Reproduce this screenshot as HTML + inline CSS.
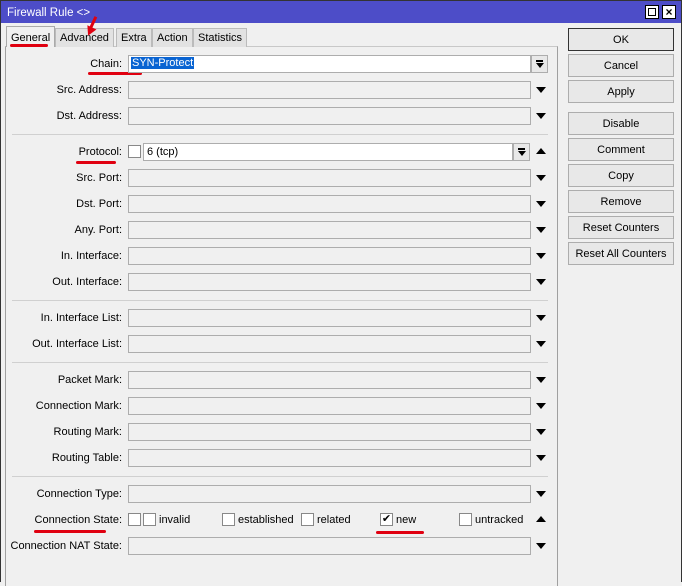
<!DOCTYPE html>
<html><head><meta charset="utf-8"><style>
*{margin:0;padding:0;box-sizing:border-box}
body{width:682px;height:582px;background:#f0f0f0;font-family:"Liberation Sans",sans-serif;font-size:11px;color:#000;position:relative;overflow:hidden}
.a{position:absolute}
.title{left:0;top:0;width:682px;height:23px;background:#4d4dc8;color:#fff;font-size:11.5px;padding:6px 0 0 6px;border:1px solid #333;border-bottom:none}
.wb{border-left:1px solid #333;border-right:1px solid #333;left:0;top:23px;width:682px;height:559px}
.tb{height:19px;top:28px;border:1px solid #bbb;border-bottom:none;background:#e2e2e2;padding:3px 4px 0;font-size:11px}
.panel{left:5px;top:46px;width:553px;height:540px;border-left:1px solid #a0a0a0;border-right:1px solid #a0a0a0;border-top:1px solid #c8c8c8}
.lbl{text-align:right;white-space:nowrap;font-size:11px}
.f{left:128px;width:403px;height:18px;border:1px solid #adadad;background:#f0f0f0}
.sep{left:12px;width:536px;height:1px;background:#d0d0d0}
.dn{width:0;height:0;border-left:5px solid transparent;border-right:5px solid transparent;border-top:6px solid #000;left:536px}
.up{width:0;height:0;border-left:5px solid transparent;border-right:5px solid transparent;border-bottom:6px solid #000;left:536px}
.btn{left:568px;width:106px;height:23px;border:1px solid #adadad;background:#e8e8e8;text-align:center;padding-top:5px;font-size:11px}
.cb{width:13px;height:13px;border:1px solid #888;background:#fff}
.red{height:3px;background:#e00010;border-radius:2px}
.dd{width:17px;height:18px;border:1px solid #adadad;background:#e8e8e8}
.dd:before{content:"";position:absolute;left:4px;top:4px;width:7px;height:2px;background:#000}
.dd:after{content:"";position:absolute;left:4px;top:7px;border-left:4px solid transparent;border-right:4px solid transparent;border-top:5px solid #000}
</style></head><body>
<div class="a title">Firewall Rule &lt;&gt;</div>
<div class="a" style="left:645px;top:5px;width:14px;height:14px;background:#fff;border:1px solid #000"><div style="margin:2px;width:8px;height:8px;border:1px solid #000"></div></div>
<div class="a" style="left:662px;top:5px;width:14px;height:14px;background:#fff;border:1px solid #000;font-weight:bold;font-size:12px;line-height:12px;text-align:center">×</div>
<div class="a wb"></div>
<div class="a panel"></div>
<div class="a tb" style="left:6px;top:26px;height:21px;background:#f0f0f0;padding-top:5px;border-color:#aaa">General</div>
<div class="a tb" style="left:55px">Advanced</div>
<div class="a tb" style="left:116px">Extra</div>
<div class="a tb" style="left:152px">Action</div>
<div class="a tb" style="left:193px">Statistics</div>
<div class="a red" style="left:10px;top:44px;width:38px"></div>
<div class="a" style="left:91px;top:16px;width:3px;height:16px;background:#e00010;transform:rotate(25deg)"></div>
<div class="a" style="left:85px;top:27px;border-left:5px solid transparent;border-right:5px solid transparent;border-top:9px solid #e00010;transform:rotate(25deg)"></div>

<div class="a lbl" style="top:58px;left:0;width:122px">Chain:</div>
<div class="a red" style="left:88px;top:72px;width:54px"></div>
<div class="a f" style="top:55px;background:#fff;padding:1px 0 0 2px"><span style="background:#0a64d2;color:#fff;padding:0 1px">SYN-Protect</span></div>
<div class="a dd" style="left:531px;top:55px"></div>

<div class="a lbl" style="top:84px;left:0;width:122px">Src. Address:</div><div class="a f" style="top:81px"></div><div class="a dn" style="top:87px"></div>
<div class="a lbl" style="top:110px;left:0;width:122px">Dst. Address:</div><div class="a f" style="top:107px"></div><div class="a dn" style="top:113px"></div>
<div class="a sep" style="top:134px"></div>

<div class="a lbl" style="top:146px;left:0;width:122px">Protocol:</div>
<div class="a red" style="left:76px;top:161px;width:40px"></div>
<div class="a cb" style="left:128px;top:145px"></div>
<div class="a f" style="left:143px;top:143px;width:370px;background:#fff;padding:2px 3px">6 (tcp)</div>
<div class="a dd" style="left:513px;top:143px"></div>
<div class="a up" style="top:148px"></div>

<div class="a lbl" style="top:172px;left:0;width:122px">Src. Port:</div><div class="a f" style="top:169px"></div><div class="a dn" style="top:175px"></div>
<div class="a lbl" style="top:198px;left:0;width:122px">Dst. Port:</div><div class="a f" style="top:195px"></div><div class="a dn" style="top:201px"></div>
<div class="a lbl" style="top:224px;left:0;width:122px">Any. Port:</div><div class="a f" style="top:221px"></div><div class="a dn" style="top:227px"></div>
<div class="a lbl" style="top:250px;left:0;width:122px">In. Interface:</div><div class="a f" style="top:247px"></div><div class="a dn" style="top:253px"></div>
<div class="a lbl" style="top:276px;left:0;width:122px">Out. Interface:</div><div class="a f" style="top:273px"></div><div class="a dn" style="top:279px"></div>
<div class="a sep" style="top:300px"></div>
<div class="a lbl" style="top:312px;left:0;width:122px">In. Interface List:</div><div class="a f" style="top:309px"></div><div class="a dn" style="top:315px"></div>
<div class="a lbl" style="top:338px;left:0;width:122px">Out. Interface List:</div><div class="a f" style="top:335px"></div><div class="a dn" style="top:341px"></div>
<div class="a sep" style="top:362px"></div>
<div class="a lbl" style="top:374px;left:0;width:122px">Packet Mark:</div><div class="a f" style="top:371px"></div><div class="a dn" style="top:377px"></div>
<div class="a lbl" style="top:400px;left:0;width:122px">Connection Mark:</div><div class="a f" style="top:397px"></div><div class="a dn" style="top:403px"></div>
<div class="a lbl" style="top:426px;left:0;width:122px">Routing Mark:</div><div class="a f" style="top:423px"></div><div class="a dn" style="top:429px"></div>
<div class="a lbl" style="top:452px;left:0;width:122px">Routing Table:</div><div class="a f" style="top:449px"></div><div class="a dn" style="top:455px"></div>
<div class="a sep" style="top:476px"></div>
<div class="a lbl" style="top:488px;left:0;width:122px">Connection Type:</div><div class="a f" style="top:485px"></div><div class="a dn" style="top:491px"></div>

<div class="a lbl" style="top:514px;left:0;width:122px">Connection State:</div>
<div class="a red" style="left:34px;top:530px;width:72px"></div>
<div class="a cb" style="left:128px;top:513px"></div>
<div class="a cb" style="left:143px;top:513px"></div><div class="a" style="left:159px;top:514px">invalid</div>
<div class="a cb" style="left:222px;top:513px"></div><div class="a" style="left:238px;top:514px">established</div>
<div class="a cb" style="left:301px;top:513px"></div><div class="a" style="left:317px;top:514px">related</div>
<div class="a cb" style="left:380px;top:513px;font-size:11px;line-height:11px;text-align:center">✔</div><div class="a" style="left:396px;top:514px">new</div>
<div class="a red" style="left:376px;top:531px;width:48px"></div>
<div class="a cb" style="left:459px;top:513px"></div><div class="a" style="left:475px;top:514px">untracked</div>
<div class="a up" style="top:516px"></div>
<div class="a lbl" style="top:540px;left:0;width:122px">Connection NAT State:</div><div class="a f" style="top:537px"></div><div class="a dn" style="top:543px"></div>

<div class="a btn" style="top:28px;border-color:#333">OK</div>
<div class="a btn" style="top:54px">Cancel</div>
<div class="a btn" style="top:80px">Apply</div>
<div class="a btn" style="top:112px">Disable</div>
<div class="a btn" style="top:138px">Comment</div>
<div class="a btn" style="top:164px">Copy</div>
<div class="a btn" style="top:190px">Remove</div>
<div class="a btn" style="top:216px">Reset Counters</div>
<div class="a btn" style="top:242px">Reset All Counters</div>
</body></html>
